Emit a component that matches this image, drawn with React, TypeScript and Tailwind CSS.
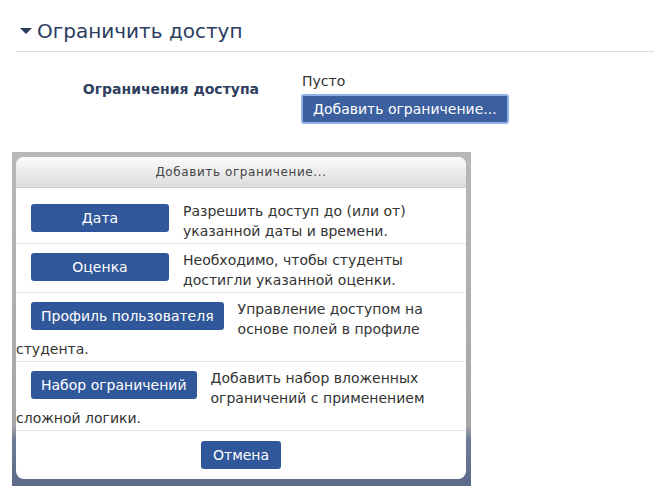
import React from 'react';

const font = { fontFamily: '"DejaVu Sans", Verdana, sans-serif' };

interface Option {
  label: string;
  text: string;
}

const options: Option[] = [
  { label: 'Дата', text: 'Разрешить доступ до (или от) указанной даты и времени.' },
  { label: 'Оценка', text: 'Необходимо, чтобы студенты достигли указанной оценки.' },
  { label: 'Профиль пользователя', text: 'Управление доступом на основе полей в профиле студента.' },
  { label: 'Набор ограничений', text: 'Добавить набор вложенных ограничений с применением сложной логики.' },
];

export default function App() {
  return (
    <div className="w-[654px] h-[502px] bg-white overflow-hidden text-[#333]" style={font}>
      {/* Section header */}
      <div className="ml-[16px] pt-[18px] pb-[7px] border-b border-[#dedede] flex items-center">
        <svg width="12" height="7" viewBox="0 0 12 7" className="ml-[4px] mr-[5px] mt-[1px]">
          <path d="M0 0 L12 0 L6 6 Z" fill="#2a3d5f" />
        </svg>
        <h2 className="text-[20px] leading-[26px] text-[#2a3d5f]">Ограничить доступ</h2>
      </div>

      {/* Form row */}
      <div className="flex mt-[20px]">
        <div className="w-[260px] pr-[1px] text-right pt-[7px] text-[14px] font-bold text-[#2f3f60]">
          Ограничения доступа
        </div>
        <div className="ml-[41px] flex flex-col items-start">
          <span className="text-[14px] leading-[18px] ml-[1px]">Пусто</span>
          <button className="mt-[4px] h-[30px] px-[10px] rounded-[3px] bg-[#3b5f9f] border-2 border-[#8fb1e3] text-white text-[14px]">
            Добавить ограничение...
          </button>
        </div>
      </div>

      {/* Dialog on the dimmed page */}
      <div className="mt-[28px] ml-[12px] w-[459px] pt-[5px] pl-[4px] pr-[5px] pb-[7px] bg-[linear-gradient(180deg,#b8b8b8_0%,#a6a6a6_82%,#6f7c98_86%,#5c6a8a_100%)]">
        <div className="w-[450px] bg-white rounded-[8px] overflow-hidden">
          <div className="h-[31px] flex items-center justify-center border-b border-[#cfcfcf] bg-[linear-gradient(180deg,#fbfbfb,#dcdcdc)] text-[12px] tracking-[0.6px] text-[#444]">
            Добавить ограничение...
          </div>
          <div className="pt-[7px]">
            {options.map((o) => (
              <div key={o.label} className="pt-[6px] pb-[2px] pr-[16px] border-b border-[#e6e6e6] text-[14px] leading-[20px] flow-root">
                <button className="float-left ml-[15px] mr-[14px] mt-[3px] h-[28px] min-w-[138px] px-[10px] rounded-[3px] bg-[#30579a] text-white text-[14px] leading-[28px]">
                  {o.label}
                </button>
                {o.text}
              </div>
            ))}
          </div>
          <div className="flex justify-center pt-[10px] pb-[10px]">
            <button className="h-[28px] px-[12px] rounded-[3px] bg-[#30579a] text-white text-[14px]">Отмена</button>
          </div>
        </div>
      </div>
    </div>
  );
}
